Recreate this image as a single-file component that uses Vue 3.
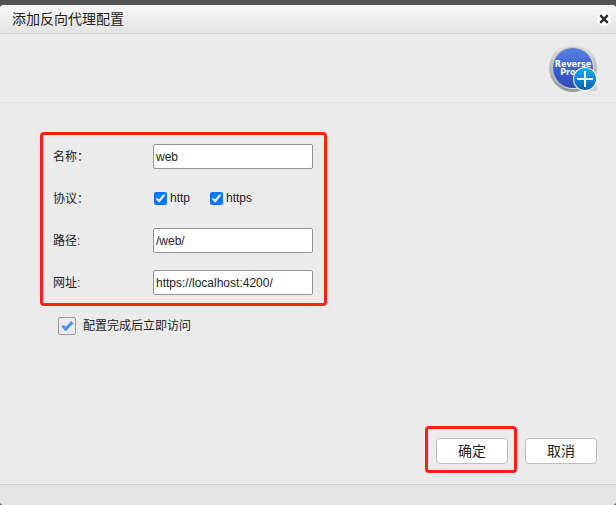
<script setup>
import { reactive } from 'vue';

const form = reactive({
  name: 'web',
  http: true,
  https: true,
  path: '/web/',
  url: 'https://localhost:4200/',
  visit: true,
});
</script>

<template>
  <div class="backdrop">
    <form class="dialog" @submit.prevent>
      <header class="title-bar">
        <h1>添加反向代理配置</h1>
        <button type="button" class="close" aria-label="关闭">
          <svg width="14" height="14" viewBox="0 0 14 14">
            <circle cx="7" cy="7" r="7" fill="#fff" />
            <path d="M3.2 3.2L10.8 10.8M10.8 3.2L3.2 10.8" stroke="#2b2b2b" stroke-width="2.4" />
          </svg>
        </button>
      </header>

      <div class="banner">
        <svg width="48" height="48" viewBox="0 0 48 48">
          <defs>
            <linearGradient id="rim" x1="0" y1="0" x2="0" y2="1">
              <stop offset="0" stop-color="#e9e9e7" />
              <stop offset="0.5" stop-color="#b9bbba" />
              <stop offset="1" stop-color="#929a9c" />
            </linearGradient>
            <linearGradient id="bevel" x1="0" y1="0" x2="1" y2="1">
              <stop offset="0" stop-color="#b4b7b5" />
              <stop offset="1" stop-color="#efeadb" />
            </linearGradient>
            <linearGradient id="face" x1="0" y1="0" x2="0" y2="1">
              <stop offset="0" stop-color="#5a82e0" />
              <stop offset="0.5" stop-color="#3f62d3" />
              <stop offset="1" stop-color="#2d48b8" />
            </linearGradient>
            <linearGradient id="badge" x1="0" y1="0" x2="0" y2="1">
              <stop offset="0" stop-color="#19a9f2" />
              <stop offset="1" stop-color="#0565b8" />
            </linearGradient>
          </defs>
          <path d="M36 40H48V46H36Z" fill="#a9adad" opacity="0.4" />
          <circle cx="24" cy="23" r="24" fill="url(#rim)" />
          <circle cx="24" cy="23" r="21" fill="url(#bevel)" />
          <circle cx="24" cy="23" r="20" fill="url(#face)" />
          <text x="24" y="22" class="logo-text">Reverse</text>
          <text x="24" y="30" class="logo-text">Proxy</text>
          <circle cx="36" cy="34" r="12" fill="#fff" />
          <circle cx="36" cy="34" r="11" fill="url(#badge)" />
          <path d="M36 26V42M28 34H44" stroke="#fff" stroke-width="2" />
        </svg>
      </div>

      <main class="content">
        <div class="fields">
          <div class="row">
            <label class="caption" for="name">名称：</label>
            <input id="name" v-model="form.name" type="text" class="text" />
          </div>
          <div class="row" role="group" aria-labelledby="protocol">
            <span id="protocol" class="caption">协议：</span>
            <label class="option"><input v-model="form.http" type="checkbox" />http</label>
            <label class="option"><input v-model="form.https" type="checkbox" />https</label>
          </div>
          <div class="row">
            <label class="caption" for="path">路径:</label>
            <input id="path" v-model="form.path" type="text" class="text" />
          </div>
          <div class="row">
            <label class="caption" for="url">网址:</label>
            <input id="url" v-model="form.url" type="text" class="text" />
          </div>
        </div>
        <label class="visit">
          <input v-model="form.visit" type="checkbox" />
          <span>配置完成后立即访问</span>
        </label>
      </main>

      <div class="actions">
        <div class="marked">
          <button type="submit">确定</button>
        </div>
        <button type="button">取消</button>
      </div>
      <footer class="status"></footer>
    </form>
  </div>
</template>

<style>
body {
  margin: 0;
}
</style>

<style scoped>
.backdrop {
  display: flex;
  min-height: 100vh;
  box-sizing: border-box;
  padding-top: 5px;
  background: #555;
}
.dialog {
  flex: 1;
  display: flex;
  flex-direction: column;
  overflow: hidden;
  border-radius: 4px;
  background: #ebebeb;
  color: #222;
  font: 12px/18px 'Liberation Sans', 'Noto Sans CJK SC', sans-serif;
}
input,
button {
  font: inherit;
  color: inherit;
}

.title-bar {
  display: flex;
  align-items: center;
  justify-content: space-between;
  height: 28px;
  padding: 0 5px 0 12px;
  border-bottom: 1px solid #d6d6d6;
  background: linear-gradient(#f9f9f9, #e3e3e3);
}
h1 {
  margin: 0;
  font-size: 14px;
  font-weight: normal;
  line-height: 20px;
}
.close {
  display: flex;
  padding: 0;
  border: 0;
  background: none;
}

.banner {
  display: flex;
  justify-content: flex-end;
  padding: 11px 19px 9px;
  border-bottom: 1px solid #dedede;
}
.banner svg {
  overflow: visible;
}
.logo-text {
  fill: #fff;
  font: bold 8px 'DejaVu Sans', sans-serif;
  text-anchor: middle;
}

.content {
  flex: 1;
  display: flex;
  flex-direction: column;
  align-items: flex-start;
  padding: 29px 40px 0;
}
.fields {
  padding: 0 11px 0 10px;
  border: 3px solid #ff1f13;
  border-radius: 4px;
}
.row {
  display: flex;
  align-items: center;
  height: 42px;
}
.caption {
  width: 100px;
  padding-top: 2px;
}
.text {
  width: 160px;
  height: 25px;
  box-sizing: border-box;
  padding: 1px 2px 0;
  border: 1px solid #949494;
  border-radius: 2px;
  background: #fff;
}
.option {
  display: flex;
  align-items: center;
  gap: 3px;
  margin-right: 19px;
}
.option input {
  width: 13px;
  height: 13px;
  margin: 0 0 0 1px;
  accent-color: #0075ff;
}
.visit {
  display: flex;
  align-items: center;
  gap: 7px;
  margin: 11px 0 0 18px;
}
.visit input {
  appearance: none;
  display: grid;
  place-items: center;
  width: 18px;
  height: 18px;
  box-sizing: border-box;
  margin: 0;
  border: 1px solid #999;
  border-radius: 2px;
}
.visit input:checked::before {
  content: '';
  width: 11px;
  height: 6px;
  margin-bottom: 3px;
  border: solid #4a90e8;
  border-width: 0 0 3px 3px;
  box-sizing: border-box;
  transform: rotate(-45deg);
}

.actions {
  display: flex;
  align-items: flex-end;
  justify-content: flex-end;
  gap: 8px;
  padding: 0 19px 11px;
}
.marked {
  padding: 9px 6px 6px 8px;
  border: 3px solid #ff1f13;
  border-radius: 4px;
}
.actions button {
  display: block;
  width: 72px;
  height: 26px;
  padding: 0;
  border: 1px solid #bdbdbd;
  border-radius: 4px;
  background: #fff;
  font-size: 14px;
}
.marked + button {
  margin-bottom: 9px;
}
.status {
  height: 20px;
  border-top: 1px solid #d2d2d2;
  background: #e4e4e4;
}
</style>
